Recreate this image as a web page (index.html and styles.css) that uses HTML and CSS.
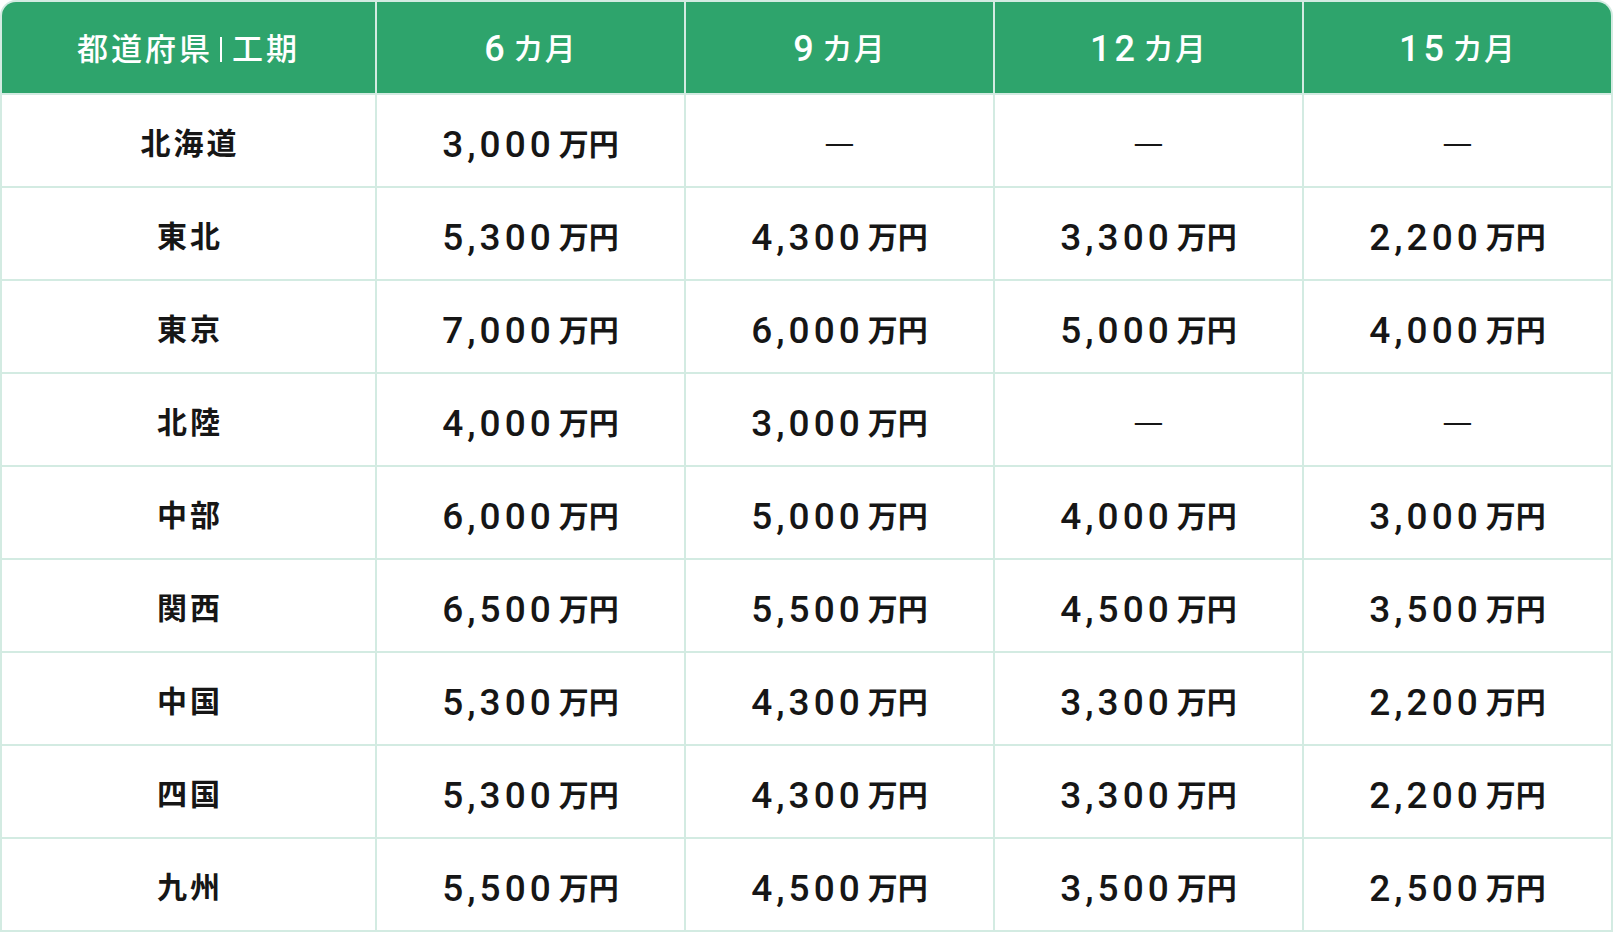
FILE: index.html
```html
<!DOCTYPE html>
<html lang="ja">
<head>
<meta charset="utf-8">
<title>工期別</title>
<link rel="stylesheet" href="styles.css">
</head>
<body>
<div class="table">
  <div class="cell head"><span class="jp">都道府県</span><span class="bar"></span><span class="jp">工期</span></div>
  <div class="cell head"><span class="num">6</span><span class="unit">カ月</span></div>
  <div class="cell head"><span class="num">9</span><span class="unit">カ月</span></div>
  <div class="cell head"><span class="num">12</span><span class="unit">カ月</span></div>
  <div class="cell head"><span class="num">15</span><span class="unit">カ月</span></div>

  <div class="cell label">北海道</div>
  <div class="cell"><span class="num">3,000</span><span class="unit">万円</span></div>
  <div class="cell"><span class="dash">—</span></div>
  <div class="cell"><span class="dash">—</span></div>
  <div class="cell"><span class="dash">—</span></div>

  <div class="cell label">東北</div>
  <div class="cell"><span class="num">5,300</span><span class="unit">万円</span></div>
  <div class="cell"><span class="num">4,300</span><span class="unit">万円</span></div>
  <div class="cell"><span class="num">3,300</span><span class="unit">万円</span></div>
  <div class="cell"><span class="num">2,200</span><span class="unit">万円</span></div>

  <div class="cell label">東京</div>
  <div class="cell"><span class="num">7,000</span><span class="unit">万円</span></div>
  <div class="cell"><span class="num">6,000</span><span class="unit">万円</span></div>
  <div class="cell"><span class="num">5,000</span><span class="unit">万円</span></div>
  <div class="cell"><span class="num">4,000</span><span class="unit">万円</span></div>

  <div class="cell label">北陸</div>
  <div class="cell"><span class="num">4,000</span><span class="unit">万円</span></div>
  <div class="cell"><span class="num">3,000</span><span class="unit">万円</span></div>
  <div class="cell"><span class="dash">—</span></div>
  <div class="cell"><span class="dash">—</span></div>

  <div class="cell label">中部</div>
  <div class="cell"><span class="num">6,000</span><span class="unit">万円</span></div>
  <div class="cell"><span class="num">5,000</span><span class="unit">万円</span></div>
  <div class="cell"><span class="num">4,000</span><span class="unit">万円</span></div>
  <div class="cell"><span class="num">3,000</span><span class="unit">万円</span></div>

  <div class="cell label">関西</div>
  <div class="cell"><span class="num">6,500</span><span class="unit">万円</span></div>
  <div class="cell"><span class="num">5,500</span><span class="unit">万円</span></div>
  <div class="cell"><span class="num">4,500</span><span class="unit">万円</span></div>
  <div class="cell"><span class="num">3,500</span><span class="unit">万円</span></div>

  <div class="cell label">中国</div>
  <div class="cell"><span class="num">5,300</span><span class="unit">万円</span></div>
  <div class="cell"><span class="num">4,300</span><span class="unit">万円</span></div>
  <div class="cell"><span class="num">3,300</span><span class="unit">万円</span></div>
  <div class="cell"><span class="num">2,200</span><span class="unit">万円</span></div>

  <div class="cell label">四国</div>
  <div class="cell"><span class="num">5,300</span><span class="unit">万円</span></div>
  <div class="cell"><span class="num">4,300</span><span class="unit">万円</span></div>
  <div class="cell"><span class="num">3,300</span><span class="unit">万円</span></div>
  <div class="cell"><span class="num">2,200</span><span class="unit">万円</span></div>

  <div class="cell label">九州</div>
  <div class="cell"><span class="num">5,500</span><span class="unit">万円</span></div>
  <div class="cell"><span class="num">4,500</span><span class="unit">万円</span></div>
  <div class="cell"><span class="num">3,500</span><span class="unit">万円</span></div>
  <div class="cell"><span class="num">2,500</span><span class="unit">万円</span></div>
</div>
</body>
</html>
```

FILE: styles.css
```css
html, body {
  margin: 0;
  padding: 0;
  background: #ffffff;
}

body {
  font-family: "Noto Sans CJK JP", sans-serif;
  color: #161616;
}

.table {
  width: 1613px;
  box-sizing: border-box;
  display: grid;
  grid-template-columns: 373px repeat(4, 1fr);
  grid-auto-rows: 91px;
  gap: 2px;
  padding: 2px;
  background: #d3ebe2;
  border-radius: 16px 16px 0 0;
  overflow: hidden;
}

.cell {
  background: #ffffff;
  font-family: "Noto Sans CJK JP", sans-serif;
  font-size: 30px;
  line-height: 95px;
  text-align: center;
  white-space: nowrap;
  overflow: hidden;
}

.cell span {
  line-height: 1;
}

.head {
  background: #2ea46c;
  color: #ffffff;
  line-height: 91px;
}

.head:first-child {
  border-top-left-radius: 14px;
}

.head:nth-child(5) {
  border-top-right-radius: 14px;
}

.jp {
  font-size: 31px;
  font-weight: 500;
  letter-spacing: 3px;
}

.bar {
  display: inline-block;
  width: 2px;
  height: 25px;
  background: #ffffff;
  margin: 0 10px 0 7px;
  vertical-align: -2px;
}

.num {
  font-family: Roboto, sans-serif;
  font-size: 37px;
  font-weight: 500;
  letter-spacing: 4px;
  vertical-align: -2px;
}

.unit {
  font-size: 30px;
  font-weight: 700;
  margin-left: 4px;
}

.head .unit {
  font-weight: 500;
  font-size: 31px;
  letter-spacing: 1px;
}

.head .num {
  font-size: 36px;
  vertical-align: -1px;
}

.label {
  font-size: 30px;
  font-weight: 700;
  letter-spacing: 3px;
  padding-left: 3px;
  line-height: 93px;
}

.dash {
  font-size: 34px;
  font-weight: 400;
}
```
